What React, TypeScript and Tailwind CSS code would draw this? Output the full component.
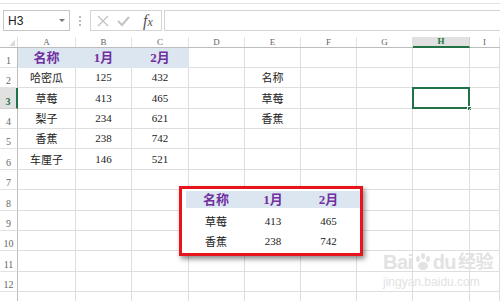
import React from "react";

const colWidths = ["w-[58px]", "w-[56px]", "w-[57px]", "w-[56px]", "w-[56px]", "w-[56px]", "w-[56px]", "w-[57px]"];
const colNames = ["A", "B", "C", "D", "E", "F", "G", "H", "I"];
const rowHeights = ["h-[20px]", "h-[20px]", "h-[21px]", "h-[20px]", "h-[20px]", "h-[21px]", "h-[20px]", "h-[21px]", "h-[20px]", "h-[20px]", "h-[21px]", "h-[20px]", "h-[20px]"];

const cjk = "font-['Noto_Sans_CJK_SC',sans-serif]";
const num = "font-['Liberation_Serif','Noto_Sans_CJK_SC',serif]";

type Row = string[];

const sheet: Row[] = [
  ["名称", "1月", "2月", "", "", "", "", "", ""],
  ["哈密瓜", "125", "432", "", "名称", "", "", "", ""],
  ["草莓", "413", "465", "", "草莓", "", "", "", ""],
  ["梨子", "234", "621", "", "香蕉", "", "", "", ""],
  ["香蕉", "238", "742", "", "", "", "", "", ""],
  ["车厘子", "146", "521", "", "", "", "", "", ""],
];

const isNum = (s: string) => /^\d+$/.test(s);

const Cell: React.FC<{ value: string; row: number; col: number }> = ({ value, row, col }) => {
  const width = col < 8 ? colWidths[col] : "flex-1";
  const header = row === 0 && col < 3;
  const selected = row === 2 && col === 7;

  return (
    <div
      className={`${width} relative flex items-center justify-center border-r border-b shrink-0 ${
        header ? "bg-[#dce6f1] border-[#dce6f1]" : "border-[#dedede]"
      }`}
    >
      {header ? (
        <span className={`text-[13px] font-bold text-[#7030a0] ${num}`}>{value}</span>
      ) : value ? (
        <span className={`text-[#222] ${isNum(value) ? `text-[11px] ${num}` : `text-[11px] ${cjk}`}`}>{value}</span>
      ) : null}
      {selected && (
        <div className="absolute -left-[1px] -top-[1px] -right-[1px] -bottom-[1px] border-2 border-[#217346]">
          <div className="absolute -right-[4px] -bottom-[4px] w-[5px] h-[5px] bg-[#217346] border border-white" />
        </div>
      )}
    </div>
  );
};

const FormulaBar: React.FC = () => (
  <div className="h-[34px] bg-white border-t border-[#e4e4e4] mt-[3px] flex items-start pt-[6px] pl-[3px]">
    <div className="w-[67px] h-[21px] border border-[#c6c6c6] flex items-center justify-between px-[4px]">
      <span className="text-[12px] text-[#222] font-['Liberation_Sans',sans-serif]">H3</span>
      <span className="w-0 h-0 border-l-[3px] border-r-[3px] border-t-[3px] border-l-transparent border-r-transparent border-t-[#777]" />
    </div>
    <div className="w-[20px] h-[21px] flex flex-col items-center justify-center gap-[2px]">
      <span className="w-[2px] h-[2px] bg-[#b8b8b8]" />
      <span className="w-[2px] h-[2px] bg-[#b8b8b8]" />
      <span className="w-[2px] h-[2px] bg-[#b8b8b8]" />
    </div>
    <div className="w-[72px] h-[21px] border border-[#d4d4d4] flex items-center px-[6px] gap-[8px]">
      <svg width="12" height="12" viewBox="0 0 12 12">
        <path d="M1 1 L11 11 M11 1 L1 11" stroke="#c4c4c4" strokeWidth="1.4" />
      </svg>
      <svg width="13" height="12" viewBox="0 0 13 12">
        <path d="M1 6 L5 10 L12 2" stroke="#c4c4c4" strokeWidth="2" fill="none" />
      </svg>
      <span className="ml-[5px] text-[16px] italic text-[#555] font-['Liberation_Serif',serif] leading-none">
        f<span className="text-[12px]">x</span>
      </span>
    </div>
    <div className="flex-1 h-[21px] ml-[2px] border border-[#d4d4d4] border-r-0" />
  </div>
);

const ColumnHeaders: React.FC = () => (
  <div className="flex h-[11px] border-b border-[#bdbdbd]">
    <div className="w-[18px] shrink-0 border-r border-[#dedede] relative">
      <div className="absolute right-[2px] bottom-[1px] w-0 h-0 border-b-[6px] border-l-[6px] border-b-[#dadada] border-l-transparent" />
    </div>
    {colNames.map((c, i) => (
      <div
        key={c}
        className={`${i < 8 ? colWidths[i] : "flex-1"} shrink-0 flex items-center justify-center border-r text-[9px] leading-none ${num} ${
          c === "H"
            ? "bg-[#e1e1e1] border-[#d0d0d0] text-[#217346] font-bold border-b-2 border-b-[#217346] -mb-[1px]"
            : "border-[#e2e2e2] text-[#666]"
        }`}
      >
        {c}
      </div>
    ))}
  </div>
);

const PastedTable: React.FC = () => {
  const rows = [
    ["草莓", "413", "465"],
    ["香蕉", "238", "742"],
  ];
  const w = ["w-[60px]", "w-[54px]", "w-[57px]"];
  return (
    <div className="absolute left-[179px] top-[186px] w-[184px] h-[70px] border-[3px] border-[#e8141b] bg-white shadow-[2px_3px_5px_rgba(0,0,0,0.45)] pt-[2px] pl-[4px]">
      <div className="flex h-[17px] bg-[#dce6f1]">
        {["名称", "1月", "2月"].map((v, i) => (
          <div key={v} className={`${w[i]} flex items-center justify-center text-[13px] font-bold text-[#7030a0] ${num}`}>
            {v}
          </div>
        ))}
      </div>
      {rows.map((r, ri) => (
        <div key={ri} className={`flex h-[20px] ${ri === 0 ? "mt-[3px]" : ""}`}>
          {r.map((v, i) => (
            <div
              key={i}
              className={`${w[i]} flex items-center justify-center text-[11px] text-[#222] ${i === 0 ? cjk : num}`}
            >
              {v}
            </div>
          ))}
        </div>
      ))}
    </div>
  );
};

const Watermark: React.FC = () => (
  <div className="absolute left-[383px] top-[252px] text-[#e2e2e2] leading-none select-none whitespace-nowrap">
    <div className="flex items-center text-[20px] font-bold font-['Liberation_Sans','Noto_Sans_CJK_SC',sans-serif] tracking-tight">
      <span>Bai</span>
      <svg width="18" height="20" viewBox="0 0 18 20" className="mx-[1px]">
        <ellipse cx="4" cy="7" rx="2" ry="3" fill="#e2e2e2" />
        <ellipse cx="9" cy="4" rx="2" ry="3" fill="#e2e2e2" />
        <ellipse cx="14" cy="7" rx="2" ry="3" fill="#e2e2e2" />
        <ellipse cx="9" cy="14" rx="5" ry="4" fill="#e2e2e2" />
      </svg>
      <span>du</span>
      <span className="ml-[2px] text-[18px]">经验</span>
    </div>
    <div className="text-[12px] mt-[4px] font-['Liberation_Sans',sans-serif]">jingyan.baidu.com</div>
  </div>
);

export default function App() {
  return (
    <div className="relative w-[500px] h-[301px] overflow-hidden bg-white">
      <FormulaBar />
      <ColumnHeaders />
      {rowHeights.map((h, r) => {
        const data = sheet[r] || [];
        const active = r === 2;
        return (
          <div key={r} className={`flex ${h}`}>
            <div
              className={`w-[18px] shrink-0 flex items-end justify-center pb-[1px] border-b text-[10px] leading-none ${num} ${
                active
                  ? "bg-[#e1e1e1] border-[#d0d0d0] border-r-2 border-r-[#217346] text-[#217346] font-bold"
                  : "border-[#e2e2e2] border-r border-r-[#bdbdbd] text-[#666]"
              }`}
            >
              {r < 12 ? r + 1 : ""}
            </div>
            {colNames.map((_, c) => (
              <Cell key={c} value={data[c] || ""} row={r} col={c} />
            ))}
          </div>
        );
      })}
      <PastedTable />
      <Watermark />
    </div>
  );
}
